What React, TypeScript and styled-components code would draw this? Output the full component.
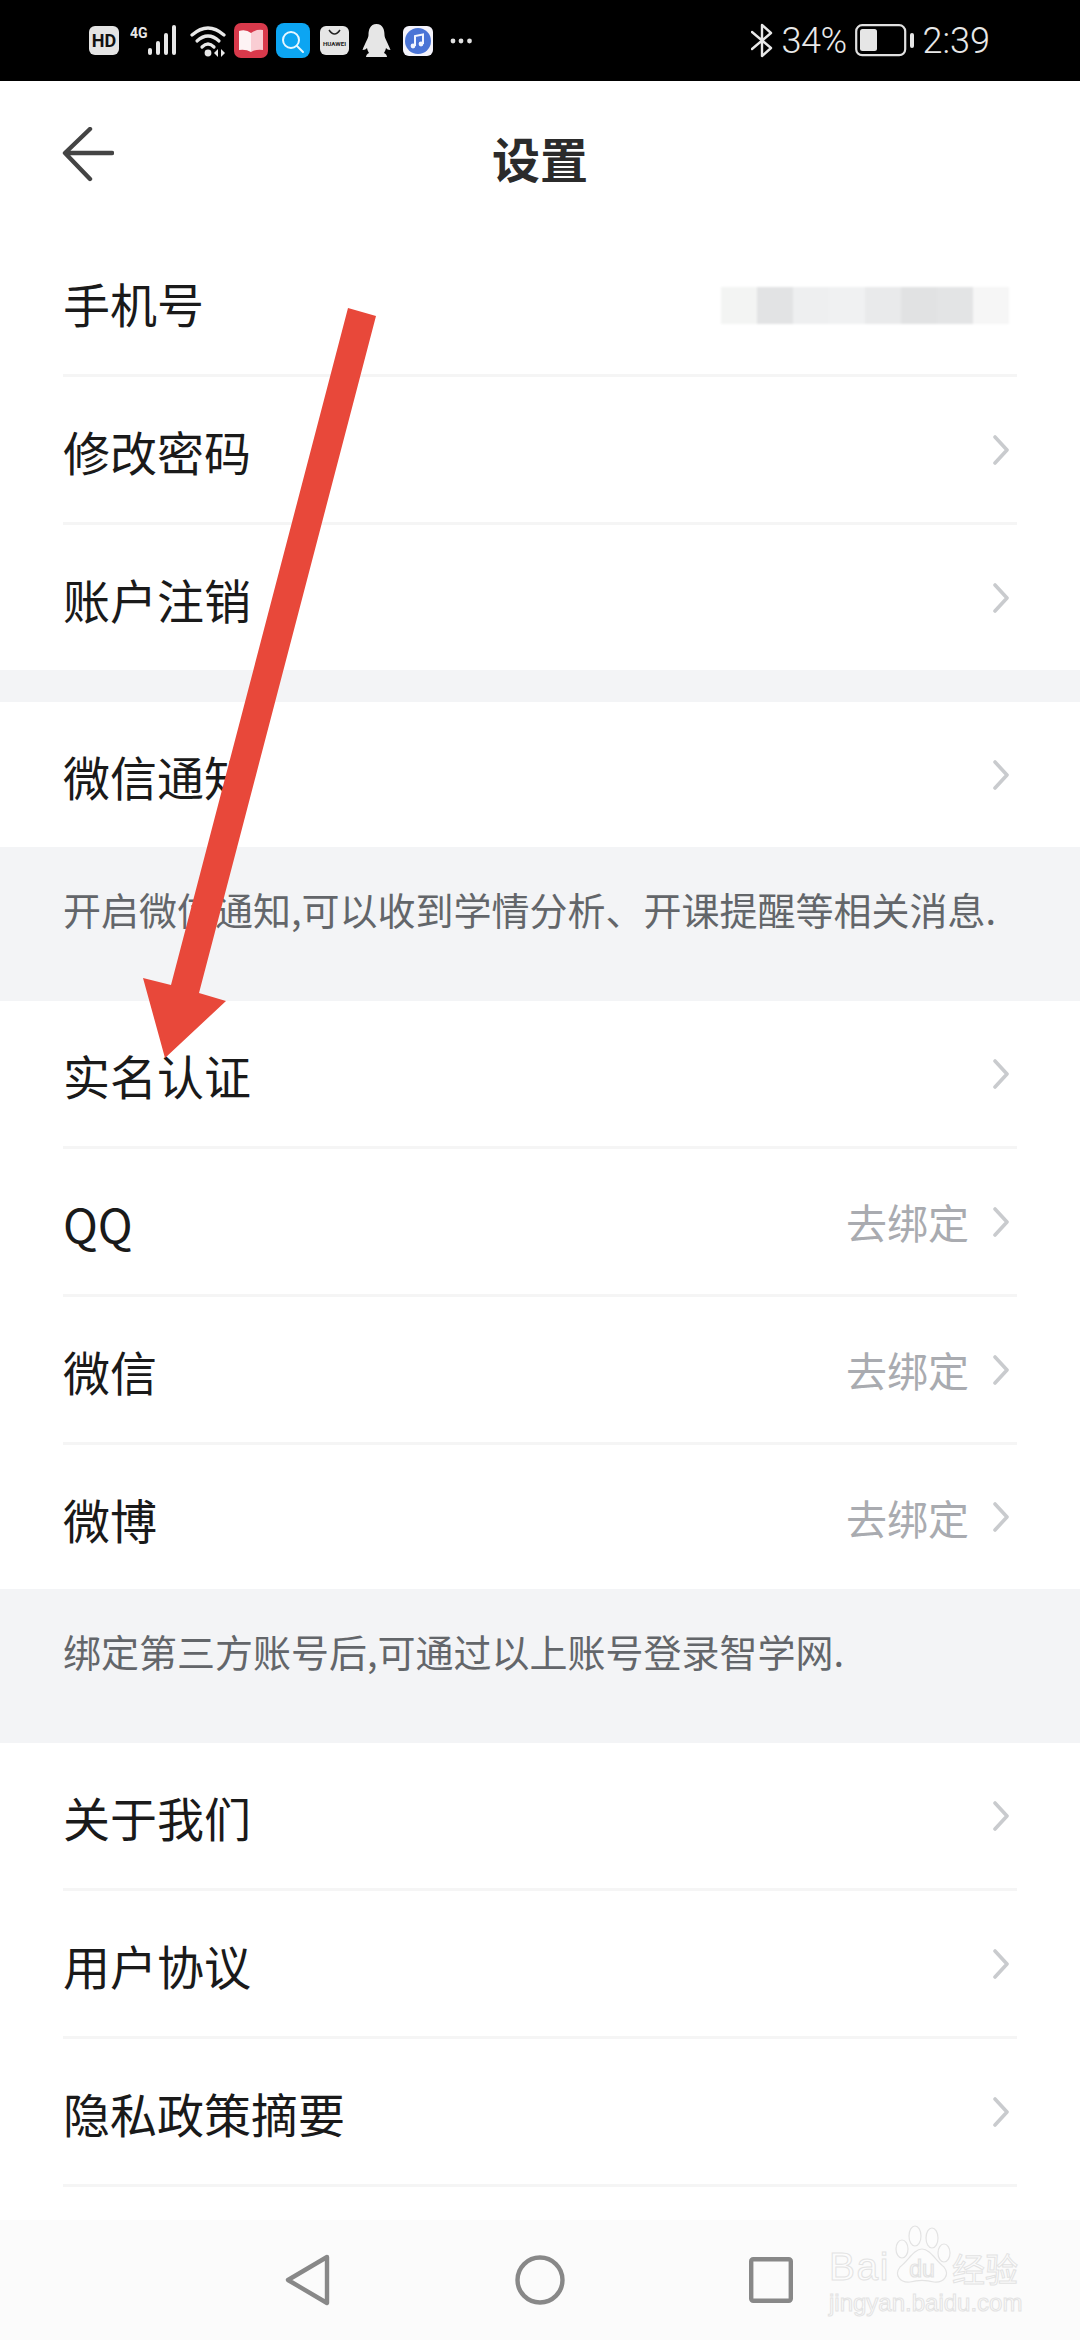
import React, { FC } from 'react'
import styled, { createGlobalStyle } from 'styled-components'

const GlobalStyle = createGlobalStyle`
  html, body { margin: 0; padding: 0; background: #fff; }
  body { font-family: "Noto Sans CJK SC", "Noto Sans", sans-serif; }
`

const Chevron: FC = () => (
  <ChevronSvg viewBox="0 0 16 30">
    <path d="M2 2 L14 15 L2 28" fill="none" stroke="#c9cbce" strokeWidth="3.6" strokeLinecap="round" strokeLinejoin="round" />
  </ChevronSvg>
)

interface SettingRowProps {
  label: string
  value?: string
  h?: number
  last?: boolean
}

const SettingRow: FC<SettingRowProps> = ({ label, value, h = 148, last }) => (
  <Row $h={h} $last={last}>
    <RowLabel>{label}</RowLabel>
    <RowRight>
      {value && <RowValue>{value}</RowValue>}
      <Chevron />
    </RowRight>
  </Row>
)

const maskColors = ['#f3f4f3', '#e2e3e4', '#eeeff0', '#f0f1f2', '#e9eaeb', '#e1e2e3', '#e3e4e5', '#f6f6f6']

const StatusIcons: FC = () => (
  <StatusLeft>
    <Slot $w={41}>
      <HdBadge>HD</HdBadge>
    </Slot>
    <Slot $w={60}>
      <svg width="51" height="32" viewBox="0 0 51 32">
        <text x="0" y="13" fontSize="14" fontWeight="700" fill="#e8e8e8" fontFamily="Roboto, sans-serif">4G</text>
        <rect x="18" y="23" width="4" height="7" rx="2" fill="#e8e8e8" />
        <rect x="26" y="16" width="4" height="14" rx="2" fill="#e8e8e8" />
        <rect x="34" y="8" width="4" height="22" rx="2" fill="#e8e8e8" />
        <rect x="42" y="0" width="4" height="30" rx="2" fill="#e8e8e8" />
      </svg>
    </Slot>
    <Slot $w={44}>
      <svg width="38" height="34" viewBox="0 0 38 34">
        <g fill="none" stroke="#e8e8e8" strokeWidth="3.2" strokeLinecap="round">
          <path d="M2 11 Q18 -3 34 11" />
          <path d="M7 17 Q18 7 29 17" />
          <path d="M12 23 Q18 17 24 23" />
        </g>
        <circle cx="18" cy="29" r="3.4" fill="#e8e8e8" />
        <path d="M28 25 L24 29 L28 33 Z M31 25 L35 29 L31 33 Z" fill="#e8e8e8" />
      </svg>
    </Slot>
    <Slot $w={42}>
      <svg width="34" height="35" viewBox="0 0 34 35">
        <rect width="34" height="35" rx="7" fill="#d8394b" />
        <path d="M5 8 Q12 6 17 10 V29 Q12 26 5 27 Z" fill="#fdf3f4" />
        <path d="M17 10 Q22 6 29 7 V27 Q22 26 17 29 Z" fill="#f9cdd3" />
      </svg>
    </Slot>
    <Slot $w={44}>
      <svg width="34" height="35" viewBox="0 0 34 35">
        <rect width="34" height="35" rx="8" fill="#0ca5f2" />
        <circle cx="15" cy="17" r="8" fill="none" stroke="#e6f7ff" strokeWidth="2" />
        <path d="M21 23 L27 29" stroke="#e6f7ff" strokeWidth="2" strokeLinecap="round" />
      </svg>
    </Slot>
    <Slot $w={42}>
      <svg width="29" height="29" viewBox="0 0 29 29">
        <rect width="29" height="29" rx="6" fill="#e6e6e6" />
        <path d="M9 4 Q14.5 12 20 4" fill="none" stroke="#222" strokeWidth="1.4" />
        <text x="14.5" y="20" fontSize="6.2" fontWeight="700" textAnchor="middle" fill="#222" fontFamily="Roboto, sans-serif">HUAWEI</text>
      </svg>
    </Slot>
    <Slot $w={41}>
      <svg width="29" height="33" viewBox="0 0 29 33">
        <path d="M14.5 0 C8 0 6.5 6 6.5 11 C6.5 14 3 19 0.5 26 C3 26 4 25 5 24 C5.5 26 6 27.5 7 29 C5 30 4 31.5 4 33 H25 C25 31.5 24 30 22 29 C23 27.5 23.5 26 24 24 C25 25 26 26 28.5 26 C26 19 22.5 14 22.5 11 C22.5 6 21 0 14.5 0 Z" fill="#e6e6e6" />
      </svg>
    </Slot>
    <Slot $w={47}>
      <svg width="30" height="30" viewBox="0 0 30 30">
        <rect width="30" height="30" rx="6" fill="#f4f3fb" />
        <circle cx="15" cy="15" r="13" fill="#4a74d6" />
        <path d="M12 20 V10 L20 8.5 V18" fill="none" stroke="#f2f5ff" strokeWidth="2" />
        <circle cx="10" cy="20" r="2.4" fill="#f2f5ff" />
        <circle cx="18" cy="18" r="2.4" fill="#f2f5ff" />
      </svg>
    </Slot>
    <Slot $w={24}>
      <svg width="23" height="6" viewBox="0 0 23 6">
        <circle cx="3" cy="3" r="2.4" fill="#e0e0e0" />
        <circle cx="11" cy="3" r="2.4" fill="#e0e0e0" />
        <circle cx="19.5" cy="3" r="2.4" fill="#e0e0e0" />
      </svg>
    </Slot>
  </StatusLeft>
)

const App: FC = () => (
  <Page>
    <GlobalStyle />
    <StatusBar>
      <StatusIcons />
      <StatusRight>
        <svg width="22" height="35" viewBox="0 0 22 35">
          <path d="M1 9 L20 25 L11 33 V2 L20 10 L1 26" fill="none" stroke="#e8e8e8" strokeWidth="2.4" strokeLinejoin="round" strokeLinecap="round" />
        </svg>
        <StatusText>34%</StatusText>
        <svg width="60" height="33" viewBox="0 0 60 33">
          <rect x="1.2" y="1.2" width="49" height="30" rx="6" fill="none" stroke="#e0e0e0" strokeWidth="2.2" />
          <rect x="5" y="5" width="17" height="22" rx="2.5" fill="#e6e6e6" />
          <rect x="55" y="9" width="4" height="15" rx="2" fill="#e6e6e6" />
        </svg>
        <TimeText>2:39</TimeText>
      </StatusRight>
    </StatusBar>

    <Header>
      <svg width="52" height="56" viewBox="0 0 52 56">
        <path d="M50 26 H4 M28 2 L3 26 L28 52" fill="none" stroke="#444" strokeWidth="4.4" strokeLinecap="round" strokeLinejoin="round" />
      </svg>
      <Title>设置</Title>
    </Header>

    <Group>
      <Row $h={148}>
        <RowLabel>手机号</RowLabel>
        <MaskedValue>
          {maskColors.map((c, i) => (
            <MaskBlock key={i} $color={c} />
          ))}
        </MaskedValue>
      </Row>
      <SettingRow label="修改密码" />
      <SettingRow label="账户注销" h={145} last />
    </Group>

    <Group $top={32}>
      <SettingRow label="微信通知" h={145} last />
    </Group>
    <Note $h={154}>开启微信通知,可以收到学情分析、开课提醒等相关消息.</Note>

    <Group>
      <SettingRow label="实名认证" h={148} />
      <SettingRow label="QQ" value="去绑定" />
      <SettingRow label="微信" value="去绑定" />
      <SettingRow label="微博" value="去绑定" h={144} last />
    </Group>
    <Note $h={154}>绑定第三方账号后,可通过以上账号登录智学网.</Note>

    <Group $fill>
      <SettingRow label="关于我们" />
      <SettingRow label="用户协议" />
      <SettingRow label="隐私政策摘要" />
    </Group>

    <NavBar>
      <svg width="46" height="52" viewBox="0 0 46 52">
        <path d="M42 3 L3 26 L42 49 Z" fill="none" stroke="#888" strokeWidth="4.4" strokeLinejoin="round" />
      </svg>
      <svg width="50" height="50" viewBox="0 0 50 50">
        <circle cx="25" cy="25" r="22.5" fill="none" stroke="#888" strokeWidth="4.4" />
      </svg>
      <svg width="44" height="46" viewBox="0 0 44 46">
        <rect x="2.2" y="2.2" width="39.6" height="41.6" rx="2" fill="none" stroke="#888" strokeWidth="4.4" />
      </svg>
      <Watermark>
        <WatermarkTop>
          <WatermarkLatin>Bai</WatermarkLatin>
          <svg width="60" height="62" viewBox="0 0 60 62">
            <g fill="#fcfcfc" stroke="#e3e3e3" strokeWidth="1.2">
              <ellipse cx="23" cy="11" rx="6" ry="10" />
              <ellipse cx="40" cy="13" rx="6" ry="10" />
              <ellipse cx="10" cy="24" rx="6" ry="9" />
              <ellipse cx="52" cy="28" rx="6" ry="9" />
              <path d="M30 24 C22 24 16 36 8 42 C2 50 8 58 18 57 C25 55 35 55 42 57 C52 58 58 50 52 42 C44 36 38 24 30 24 Z" />
              <text x="30" y="52" fontSize="23" textAnchor="middle" fontFamily="Liberation Sans, sans-serif">du</text>
            </g>
          </svg>
          <WatermarkCjk>经验</WatermarkCjk>
        </WatermarkTop>
        <WatermarkUrl>jingyan.baidu.com</WatermarkUrl>
      </Watermark>
    </NavBar>

    <ArrowLayer viewBox="0 0 1080 2340">
      <polygon points="348,308 376,316 199,993 226,1001 165,1058 143,978 171,985" fill="#e8483a" />
    </ArrowLayer>
  </Page>
)

export default App

const Page = styled.div`
  position: relative;
  width: 1080px;
  height: 2340px;
  overflow: hidden;
  display: flex;
  flex-direction: column;
  background: #f3f4f6;
`

const StatusBar = styled.div`
  height: 81px;
  flex: none;
  background: #000;
  display: flex;
  align-items: center;
  justify-content: space-between;
  padding: 0 90px 0 89px;
  box-sizing: border-box;
`

const StatusLeft = styled.div`
  display: flex;
  align-items: center;
`

const Slot = styled.div<{ $w: number }>`
  width: ${({ $w }) => $w}px;
  display: flex;
  align-items: center;
`

const HdBadge = styled.div`
  width: 30px;
  height: 29px;
  border-radius: 6px;
  background: #e4e4e4;
  color: #111;
  font: 700 18px "Roboto", sans-serif;
  display: flex;
  align-items: center;
  justify-content: center;
`

const StatusRight = styled.div`
  display: flex;
  align-items: center;
  gap: 8px;
  color: #e8e8e8;
`

const StatusText = styled.span`
  font: 300 36px "Roboto", sans-serif;
  letter-spacing: -0.5px;
`

const TimeText = styled(StatusText)`
  letter-spacing: 0;
  margin-left: 0;
`

const Header = styled.div`
  height: 148px;
  flex: none;
  background: #fff;
  display: grid;
  grid-template-columns: 1fr auto 1fr;
  align-items: center;
  padding: 0 62px;
  box-sizing: border-box;
`

const Title = styled.h1`
  margin: 4px 0 0;
  font-size: 48px;
  font-weight: 700;
  color: #2b2b2b;
  line-height: 1;
`

const Group = styled.div<{ $top?: number; $fill?: boolean }>`
  flex: ${({ $fill }) => ($fill ? '1' : 'none')};
  margin-top: ${({ $top }) => $top ?? 0}px;
  background: #fff;
`

const Row = styled.div<{ $h: number; $last?: boolean }>`
  height: ${({ $h }) => $h}px;
  box-sizing: border-box;
  margin: 0 63px;
  padding-right: 8px;
  display: flex;
  align-items: center;
  justify-content: space-between;
  border-bottom: ${({ $last }) => ($last ? 'none' : '3px solid #f5f5f5')};
`

const RowLabel = styled.span`
  font-size: 47px;
  color: #1a1a1a;
  line-height: 1;
  margin-top: 2px;
`

const RowRight = styled.div`
  display: flex;
  align-items: center;
  gap: 24px;
`

const RowValue = styled.span`
  font-size: 41px;
  color: #a9abb0;
  line-height: 1;
`

const ChevronSvg = styled.svg`
  width: 16px;
  height: 30px;
  display: block;
`

const MaskedValue = styled.div`
  display: flex;
  margin-top: 8px;
  filter: blur(1px);
`

const MaskBlock = styled.div<{ $color: string }>`
  width: 36px;
  height: 37px;
  background: ${({ $color }) => $color};
`

const Note = styled.div<{ $h: number }>`
  height: ${({ $h }) => $h}px;
  flex: none;
  box-sizing: border-box;
  padding: 40px 0 0 63px;
  font-size: 38px;
  line-height: 44px;
  color: #63666a;
  white-space: nowrap;
`

const NavBar = styled.div`
  position: relative;
  height: 120px;
  flex: none;
  background: #fbfbfb;
  display: flex;
  align-items: center;
  justify-content: center;
  gap: 184px;
  padding-right: 2px;
  box-sizing: border-box;
`

const Watermark = styled.div`
  position: absolute;
  left: 829px;
  top: 5px;
  width: 200px;
  color: #fcfcfc;
  -webkit-text-stroke: 1px #e3e3e3;
  font-family: "Liberation Sans", sans-serif;
`

const WatermarkTop = styled.div`
  display: flex;
  align-items: flex-start;
  height: 62px;
  white-space: nowrap;
`

const WatermarkLatin = styled.span`
  font-size: 39px;
  line-height: 1;
  letter-spacing: 1.5px;
  margin-top: 22px;
  width: 63px;
`

const WatermarkCjk = styled.span`
  font-family: "Noto Sans CJK SC", sans-serif;
  font-size: 33px;
  line-height: 1;
  margin-top: 27px;
`

const WatermarkUrl = styled.div`
  font-size: 24px;
  line-height: 28px;
  margin-top: 2px;
  white-space: nowrap;
`

const ArrowLayer = styled.svg`
  position: absolute;
  left: 0;
  top: 0;
  width: 1080px;
  height: 2340px;
  pointer-events: none;
`
